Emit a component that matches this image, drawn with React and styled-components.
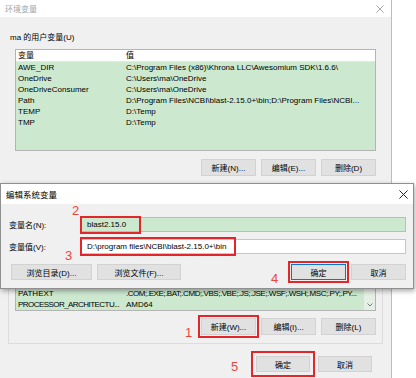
import React from "react";
import styled, { createGlobalStyle } from "styled-components";

const RED = "#e3262a";
const GREEN = "#cce8cf";

const GlobalStyle = createGlobalStyle`
  html, body { margin: 0; padding: 0; background: #fff; }
  body {
    font-family: "Liberation Sans", "Noto Sans CJK SC", sans-serif;
    font-size: 8px;
    color: #000;
  }
  * { box-sizing: border-box; }
`;

const Stage = styled.div`
  position: relative;
  width: 416px;
  height: 378px;
  overflow: hidden;
  background: #fff;
`;

const Window = styled.div`
  width: 392px;
  height: 378px;
  background: #f0f0f0;
  border-right: 1px solid #bcbcbc;
  display: flex;
  flex-direction: column;
`;

const TitleBar = styled.div`
  flex: none;
  height: ${(p) => p.$h}px;
  background: #fff;
  display: flex;
  align-items: center;
  justify-content: space-between;
  padding: 0 ${(p) => p.$pr}px 0 5px;
  color: ${(p) => (p.$inactive ? "#a3a3a3" : "#000")};
  font-size: ${(p) => (p.$inactive ? 8 : 8.5)}px;
`;

const Body = styled.div`
  flex: 1;
  display: flex;
  flex-direction: column;
  padding: 0 15px;
`;

const GroupLabel = styled.div`
  margin: 15px 0 0 -5px;
  line-height: 12px;
  height: 12px;
`;

const ListBox = styled.div`
  flex: ${(p) => (p.$fill ? 1 : "none")};
  height: ${(p) => (p.$fill ? "auto" : `${p.$h}px`)};
  margin-top: ${(p) => p.$mt || 0}px;
  border: 1px solid #b4b4b4;
  background: ${GREEN};
  display: flex;
  overflow: hidden;
`;

const Rows = styled.div`
  flex: 1;
  display: flex;
  flex-direction: column;
  justify-content: ${(p) => (p.$bottom ? "flex-end" : "flex-start")};
  overflow: hidden;
`;

const Row = styled.div`
  flex: none;
  height: ${(p) => (p.$head ? 12 : 11)}px;
  display: grid;
  grid-template-columns: 108px 1fr;
  align-items: center;
  background: ${(p) => (p.$head ? "#fff" : "transparent")};
  border-bottom: ${(p) => (p.$head ? "1px solid #e6e6e6" : "none")};
  white-space: nowrap;
  overflow: hidden;
  line-height: 11px;
`;

const Cell = styled.span`
  padding-left: 2px;
  overflow: hidden;
  letter-spacing: ${(p) => p.$ls || 0}px;
`;

const ScrollTrack = styled.div`
  flex: none;
  width: 11px;
  background: #e6efe6;
  display: flex;
  align-items: flex-end;
  justify-content: center;
  padding-bottom: 3px;
`;

const ButtonRow = styled.div`
  flex: none;
  display: flex;
  justify-content: ${(p) => p.$justify || "flex-end"};
  gap: ${(p) => p.$gap || 5}px;
  margin-top: ${(p) => p.$mt || 0}px;
  margin-right: ${(p) => p.$mr || 0}px;
  padding-left: ${(p) => p.$pl || 0}px;
`;

const Group = styled.div`
  flex: none;
  display: flex;
  gap: 5px;
`;

const Button = styled.div`
  width: ${(p) => p.$w || 55}px;
  height: ${(p) => p.$h || 17}px;
  background: #e1e1e1;
  border: 1px solid ${(p) => (p.$default ? "#0078d7" : "#d2d2d2")};
  display: flex;
  align-items: center;
  justify-content: center;
  outline: ${(p) => (p.$marked ? `2px solid ${RED}` : "none")};
  outline-offset: ${(p) => p.$off || 1}px;
`;

const SysGroup = styled.div`
  flex: none;
  height: 161px;
  margin: 7px -7px 0;
  border: 1px solid #dcdcdc;
  padding: 0 6px 8px;
  display: flex;
  flex-direction: column;
`;

const Dialog = styled.div`
  position: absolute;
  left: 0;
  top: 183px;
  width: 414px;
  height: 106px;
  background: #f0f0f0;
  border: 1px solid #8f8f8f;
  box-shadow: 1px 2px 5px rgba(0, 0, 0, 0.35);
  display: flex;
  flex-direction: column;
`;

const DialogBody = styled.div`
  flex: 1;
  padding: 13px 7px 0 8px;
  display: flex;
  flex-direction: column;
  gap: 7px;
`;

const Field = styled.div`
  display: flex;
  align-items: center;
  height: 15px;
`;

const FieldLabel = styled.div`
  width: 72px;
  flex: none;
`;

const Input = styled.div`
  position: relative;
  flex: 1;
  height: 15px;
  border: 1px solid ${(p) => (p.$focus ? "#9cc3e8" : "#c6c6c6")};
  background: ${(p) => (p.$focus ? GREEN : "#fff")};
  padding-left: 5px;
  display: flex;
  align-items: center;
  white-space: nowrap;
`;

const Mark = styled.div`
  position: absolute;
  left: -2px;
  top: ${(p) => p.$top}px;
  width: ${(p) => p.$w}px;
  height: ${(p) => p.$h}px;
  border: 2px solid ${RED};
`;

const Num = styled.span`
  position: absolute;
  left: ${(p) => p.$x}px;
  top: ${(p) => p.$y}px;
  font-family: "Liberation Sans", sans-serif;
  font-size: 13px;
  line-height: 13px;
  color: #e8463e;
`;

const CloseIcon = ({ color, size }) => (
  <svg width={size} height={size} viewBox="0 0 10 10">
    <path d="M0.5 0.5 L9.5 9.5 M9.5 0.5 L0.5 9.5" stroke={color} strokeWidth="1.1" fill="none" />
  </svg>
);

const userVars = [
  ["AWE_DIR", "C:\\Program Files (x86)\\Khrona LLC\\Awesomium SDK\\1.6.6\\"],
  ["OneDrive", "C:\\Users\\ma\\OneDrive"],
  ["OneDriveConsumer", "C:\\Users\\ma\\OneDrive"],
  ["Path", "D:\\Program Files\\NCBI\\blast-2.15.0+\\bin;D:\\Program Files\\NCBI..."],
  ["TEMP", "D:\\Temp"],
  ["TMP", "D:\\Temp"],
];

// only the rows of the system list that show below the edit dialog
const sysVars = [
  ["PATHEXT", ".COM;.EXE;.BAT;.CMD;.VBS;.VBE;.JS;.JSE;.WSF;.WSH;.MSC;.PY;.PY...", 0, -0.45],
  ["PROCESSOR_ARCHITECTU...", "AMD64", -0.55, 0],
];

export default function App() {
  return (
    <Stage>
      <GlobalStyle />
      <Window>
        <TitleBar $h={17} $pr={7} $inactive>
          <span>环境变量</span>
          <CloseIcon color="#9a9a9a" size={8} />
        </TitleBar>
        <Body>
          <GroupLabel>ma 的用户变量(U)</GroupLabel>
          <ListBox $h={102} $mt={5}>
            <Rows>
              <Row $head>
                <Cell>变量</Cell>
                <Cell>值</Cell>
              </Row>
              {userVars.map(([k, v]) => (
                <Row key={k}>
                  <Cell>{k}</Cell>
                  <Cell>{v}</Cell>
                </Row>
              ))}
            </Rows>
          </ListBox>
          <ButtonRow $mt={8}>
            <Button>新建(N)...</Button>
            <Button>编辑(E)...</Button>
            <Button>删除(D)</Button>
          </ButtonRow>

          <SysGroup>
            <ListBox $fill>
              <Rows $bottom>
                {sysVars.map(([k, v, ls1, ls2]) => (
                  <Row key={k}>
                    <Cell $ls={ls1}>{k}</Cell>
                    <Cell $ls={ls2}>{v}</Cell>
                  </Row>
                ))}
              </Rows>
              <ScrollTrack>
                <svg width="6" height="4" viewBox="0 0 6 4">
                  <path d="M0.5 0.5 L3 3 L5.5 0.5" stroke="#7a7a7a" fill="none" />
                </svg>
              </ScrollTrack>
            </ListBox>
            <ButtonRow $mt={7}>
              <Button $marked>新建(W)...</Button>
              <Button>编辑(I)...</Button>
              <Button>删除(L)</Button>
            </ButtonRow>
          </SysGroup>

          <ButtonRow $mt={12} $gap={8} $mr={4}>
            <Button $h={16} $w={54} $marked $off={3}>确定</Button>
            <Button $h={16} $w={54}>取消</Button>
          </ButtonRow>
        </Body>
      </Window>

      <Dialog>
        <TitleBar $h={20} $pr={5}>
          <span>编辑系统变量</span>
          <CloseIcon color="#222" size={9} />
        </TitleBar>
        <DialogBody>
          <Field>
            <FieldLabel>变量名(N):</FieldLabel>
            <Input $focus>
              blast2.15.0
              <Mark $top={-2} $w={61} $h={18} />
            </Input>
          </Field>
          <Field>
            <FieldLabel>变量值(V):</FieldLabel>
            <Input>
              D:\program files\NCBI\blast-2.15.0+\bin
              <Mark $top={-3} $w={156} $h={19} />
            </Input>
          </Field>
          <ButtonRow $mt={3} $justify="space-between" $pl={2}>
            <Group>
              <Button $h={16} $w={81}>浏览目录(D)...</Button>
              <Button $h={16} $w={84}>浏览文件(F)...</Button>
            </Group>
            <Group>
              <Button $h={16} $default $marked>确定</Button>
              <Button $h={16}>取消</Button>
            </Group>
          </ButtonRow>
        </DialogBody>
      </Dialog>

      <Num $x={72} $y={204}>2</Num>
      <Num $x={65} $y={249}>3</Num>
      <Num $x={271} $y={272}>4</Num>
      <Num $x={185} $y={326}>1</Num>
      <Num $x={231} $y={360}>5</Num>
    </Stage>
  );
}
